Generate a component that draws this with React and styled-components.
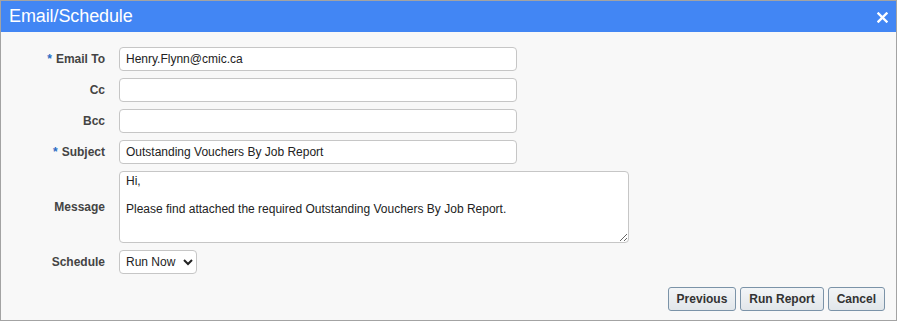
import styled, { createGlobalStyle } from "styled-components"

const GlobalStyle = createGlobalStyle`
    html, body {
        margin: 0;
        padding: 0;
        background: #ffffff;
    }
    * {
        box-sizing: border-box;
    }
`

const fields = [
    { label: "Email To", required: true, value: "Henry.Flynn@cmic.ca" },
    { label: "Cc", value: "" },
    { label: "Bcc", value: "" },
    { label: "Subject", required: true, value: "Outstanding Vouchers By Job Report" },
]

const message = "Hi,\n\nPlease find attached the required Outstanding Vouchers By Job Report."

export default function App() {
    return (
        <>
            <GlobalStyle />
            <Dialog>
                <Header>
                    <Title>Email/Schedule</Title>
                    <CloseButton aria-label="Close">
                        <svg width="11" height="11" viewBox="0 0 11 11">
                            <path d="M1.5 1.5 L9.5 9.5 M9.5 1.5 L1.5 9.5" stroke="#ffffff" strokeWidth="2.4" strokeLinecap="square" />
                        </svg>
                    </CloseButton>
                </Header>

                <Body>
                    <Form>
                        {fields.map(f => (
                            <Row key={f.label}>
                                <Label>
                                    {f.required && <Star>*</Star>}
                                    {f.label}
                                </Label>
                                <TextInput defaultValue={f.value} />
                            </Row>
                        ))}

                        <Row>
                            <Label>Message</Label>
                            <TextArea defaultValue={message} />
                        </Row>

                        <Row>
                            <Label>Schedule</Label>
                            <Select defaultValue="now">
                                <option value="now">Run Now</option>
                                <option value="later">Schedule</option>
                            </Select>
                        </Row>
                    </Form>

                    <Footer>
                        <Button>Previous</Button>
                        <Button>Run Report</Button>
                        <Button>Cancel</Button>
                    </Footer>
                </Body>
            </Dialog>
        </>
    )
}

const Dialog = styled.div`
    display: flex;
    flex-direction: column;
    width: 897px;
    height: 321px;

    border: 1px solid #a3a3a3;
    background-color: #f8f8f8;

    font-family: "Liberation Sans", Arial, sans-serif;
`
const Header = styled.div`
    display: flex;
    align-items: center;
    justify-content: space-between;
    height: 31px;
    padding: 0 8px 0 8px;

    background-color: #4286f4;
`
const Title = styled.h1`
    margin: 0;
    color: #ffffff;
    font-size: 18px;
    font-weight: normal;
    letter-spacing: -0.1px;
`
const CloseButton = styled.span`
    display: flex;
    align-items: center;
    margin-top: 1px;
    cursor: pointer;
`
const Body = styled.div`
    display: flex;
    flex: 1;
    flex-direction: column;
    padding: 15px 11px 9px 0;
`
const Form = styled.div`
    display: grid;
    grid-template-columns: 104px auto;
    column-gap: 14px;
    row-gap: 7px;
    align-items: center;
    justify-items: start;
`
const Row = styled.div`
    display: contents;
`
const Label = styled.label`
    justify-self: end;
    color: #444444;
    font-size: 12px;
    font-weight: bold;
`
const Star = styled.span`
    margin-right: 4px;
    color: #2a6cc4;
`
const fieldBase = `
    border: 1px solid #c6c6c6;
    border-radius: 4px;
    background-color: #ffffff;
    color: #222222;
    font-family: "Liberation Sans", Arial, sans-serif;
    font-size: 12px;
    outline: none;
`
const TextInput = styled.input`
    ${fieldBase}
    width: 398px;
    height: 24px;
    padding: 0 6px;
`
const TextArea = styled.textarea`
    ${fieldBase}
    width: 510px;
    height: 72px;
    padding: 2px 6px;
    line-height: 14px;
    resize: both;
`
const Select = styled.select`
    ${fieldBase}
    width: 78px;
    height: 24px;
    padding: 0 2px;
`
const Footer = styled.div`
    display: flex;
    justify-content: flex-end;
    gap: 4px;
    margin-top: auto;
`
const Button = styled.button`
    height: 24px;
    padding: 0 8px;

    border: 1px solid #7b93a8;
    border-radius: 3px;
    background: linear-gradient(#f3f5f7, #e1e6ea);

    color: #333333;
    font-family: "Liberation Sans", Arial, sans-serif;
    font-size: 12px;
    font-weight: bold;
    cursor: pointer;
`
